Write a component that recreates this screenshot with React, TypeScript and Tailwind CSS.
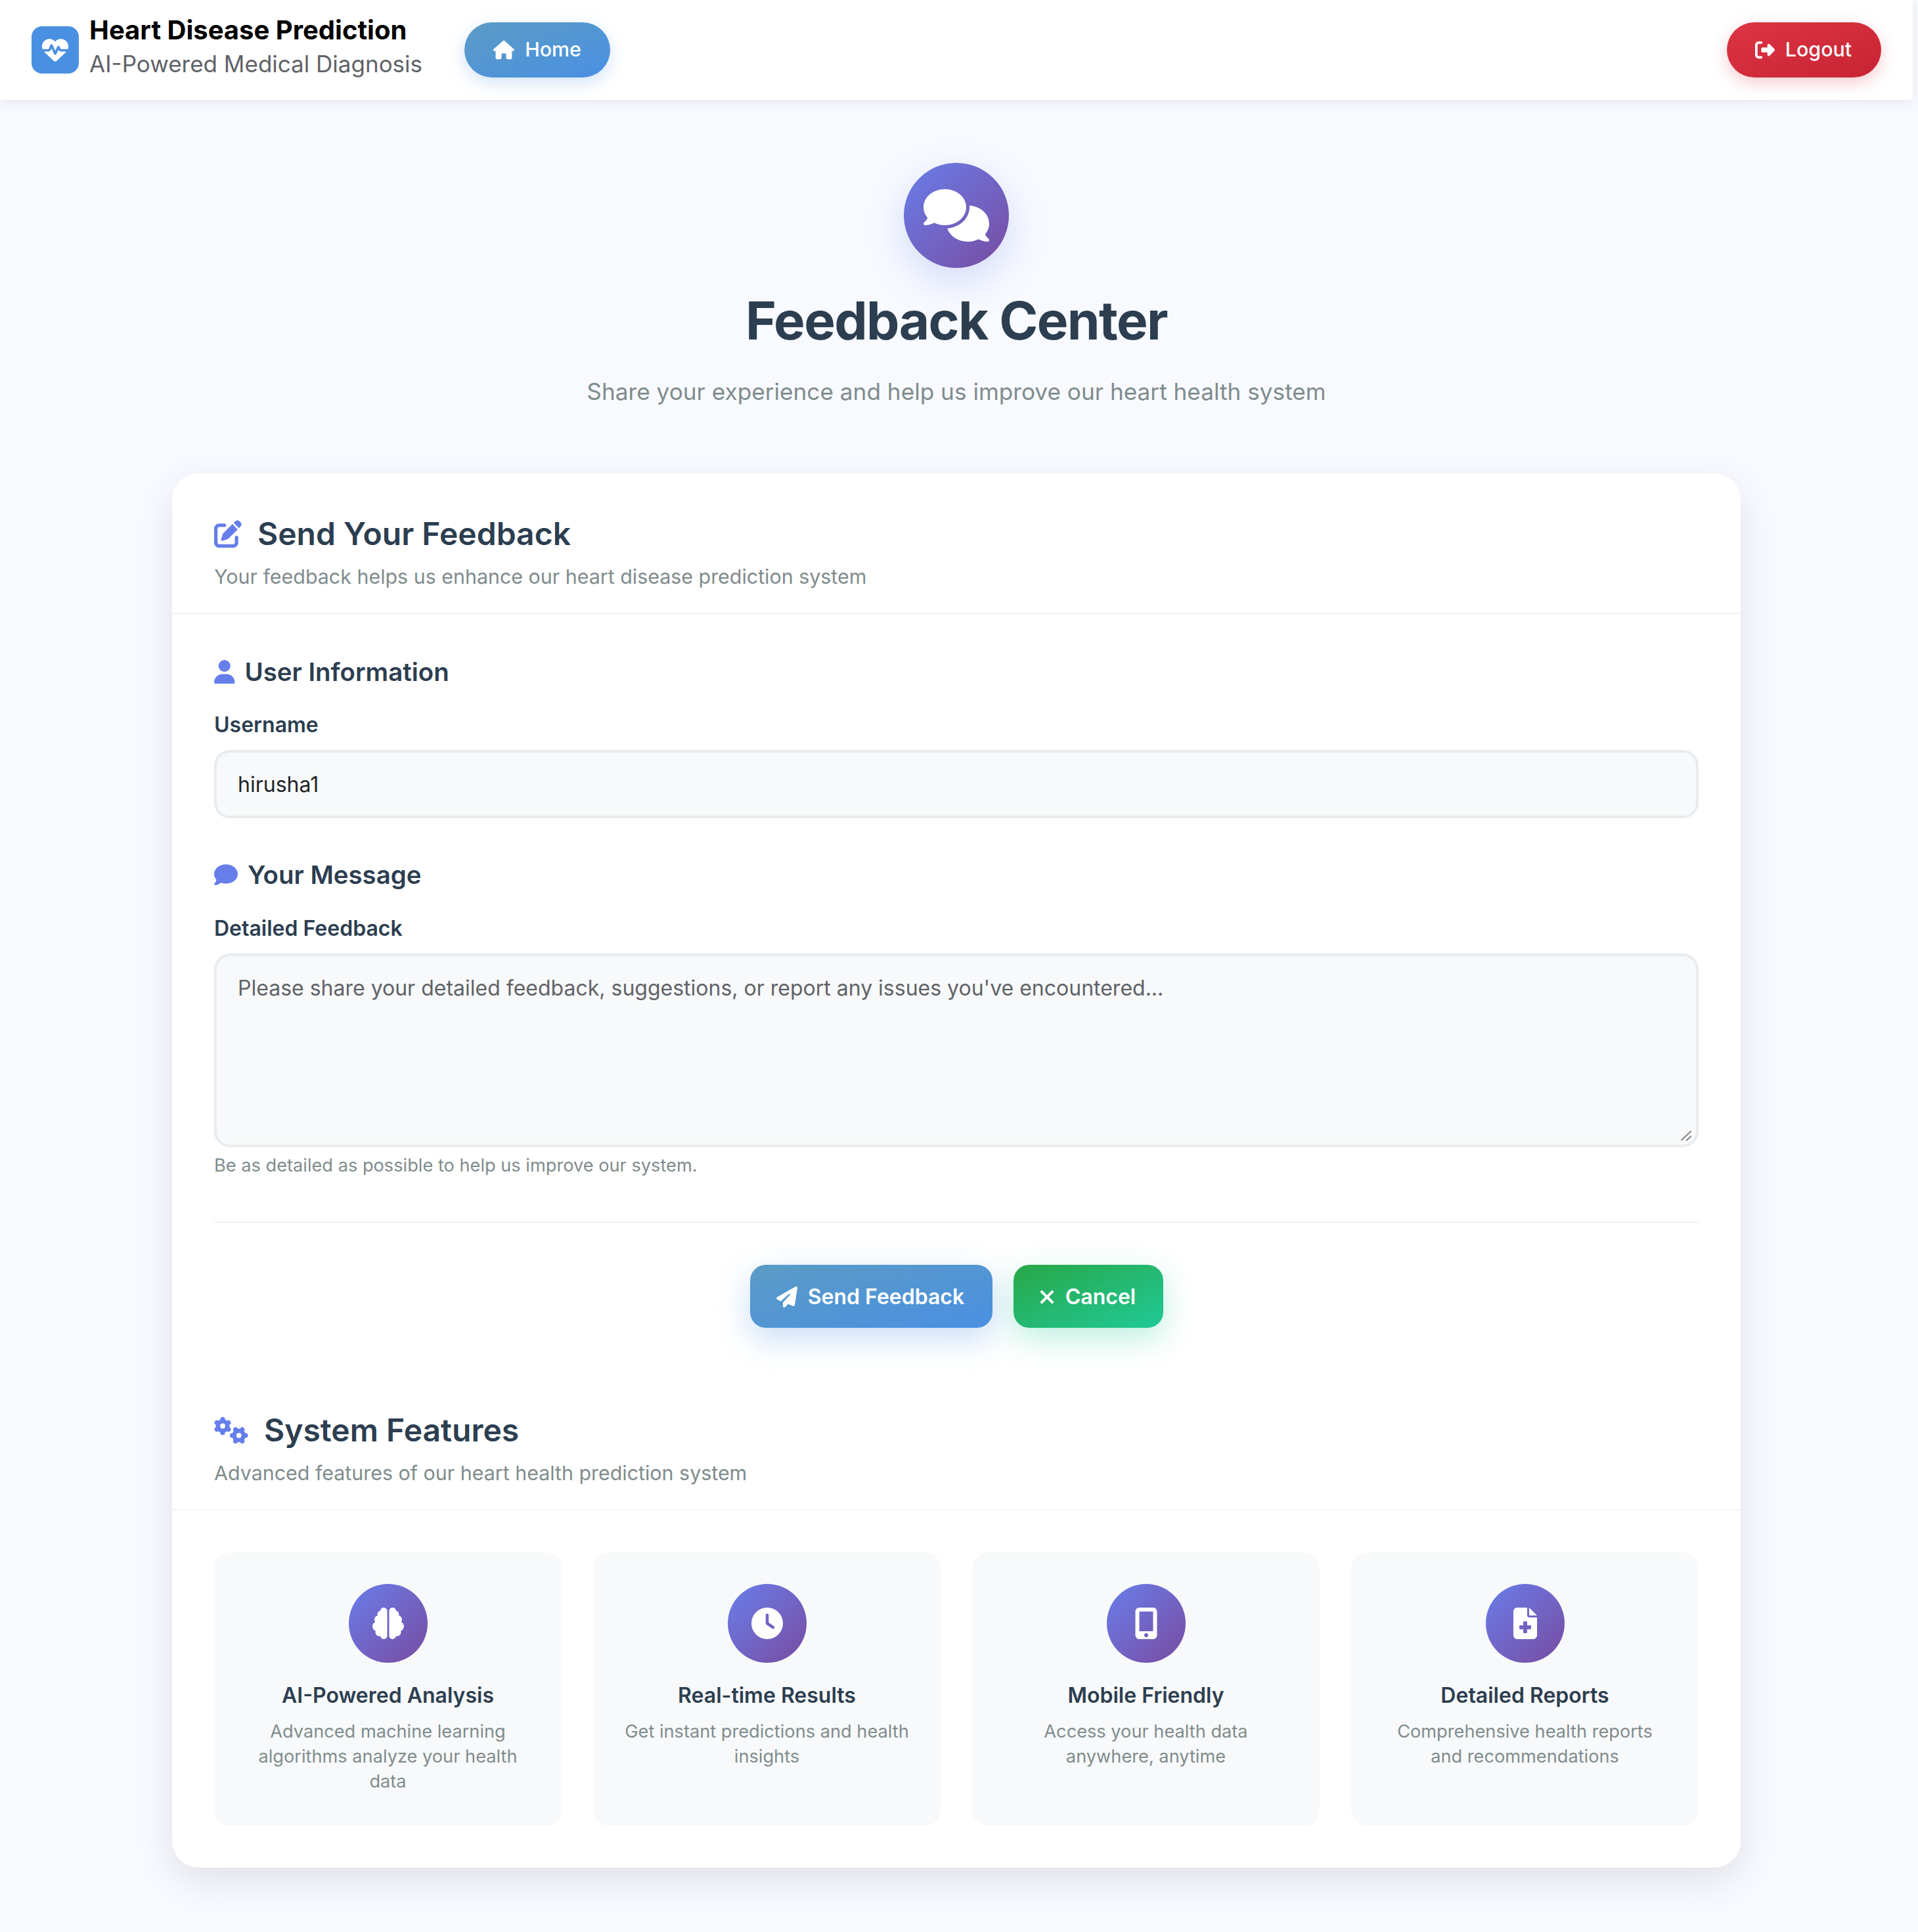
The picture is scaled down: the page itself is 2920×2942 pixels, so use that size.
import {
  FaBrain,
  FaClock,
  FaComment,
  FaComments,
  FaFileMedical,
  FaGears,
  FaHeartPulse,
  FaHouse,
  FaMobileScreenButton,
  FaPaperPlane,
  FaPenToSquare,
  FaRightFromBracket,
  FaUser,
  FaXmark,
} from "react-icons/fa6";
import type { ReactNode } from "react";

const features = [
  {
    icon: <FaBrain className="size-12" />,
    title: "AI-Powered Analysis",
    text: "Advanced machine learning algorithms analyze your health data",
  },
  {
    icon: <FaClock className="size-12" />,
    title: "Real-time Results",
    text: "Get instant predictions and health insights",
  },
  {
    icon: <FaMobileScreenButton className="size-12" />,
    title: "Mobile Friendly",
    text: "Access your health data anywhere, anytime",
  },
  {
    icon: <FaFileMedical className="size-12" />,
    title: "Detailed Reports",
    text: "Comprehensive health reports and recommendations",
  },
];

function SectionHeader({
  icon,
  title,
  subtitle,
}: {
  icon: ReactNode;
  title: string;
  subtitle: string;
}) {
  return (
    <div className="border-b-2 border-[#f1f3f4] px-16 pt-[62px] pb-[36px]">
      <h2 className="flex items-center gap-6 text-[48px] leading-[60px] font-semibold text-[#2c3e50]">
        {icon}
        {title}
      </h2>
      <p className="mt-4 text-[30.4px] leading-[38px] text-[#7f8c8d]">{subtitle}</p>
    </div>
  );
}

function FieldHeading({ icon, title }: { icon: ReactNode; title: string }) {
  return (
    <h3 className="flex items-center gap-[15px] text-[38.4px] leading-[48px] font-semibold text-[#2c3e50]">
      {icon}
      {title}
    </h3>
  );
}

export default function App() {
  return (
    <div className="min-h-[2942px] w-full bg-[#f8faff] font-['Inter',sans-serif]">
      <div className="w-[2912px]">
        {/* Nav */}
        <header className="flex h-[152px] items-center justify-between bg-white px-12 shadow-[0_4px_20px_rgba(0,0,0,0.08)]">
          <div className="flex items-center">
            <div className="flex size-[72px] items-center justify-center rounded-2xl bg-[#4a90e2] text-white">
              <FaHeartPulse className="size-10" />
            </div>
            <div className="ml-4 pb-[9px]">
              <div className="text-[40px] leading-[48px] font-bold text-black">
                Heart Disease Prediction
              </div>
              <div className="mt-[2px] text-[35px] leading-[50px] text-[#5f6368]">
                AI-Powered Medical Diagnosis
              </div>
            </div>
            <button className="ml-16 flex h-[84px] w-[222px] items-center justify-center gap-4 rounded-full bg-gradient-to-br from-[#5b9bc5] to-[#4a90e2] text-[30.4px] font-medium text-white shadow-[0_8px_24px_rgba(74,144,226,0.25)]">
              <FaHouse className="size-8" />
              Home
            </button>
          </div>
          <button className="flex h-[84px] w-[235px] items-center justify-center gap-4 rounded-full bg-gradient-to-br from-[#dc3545] to-[#c82333] pr-[2px] text-[30.4px] font-medium text-white shadow-[0_8px_24px_rgba(220,53,69,0.25)]">
            <FaRightFromBracket className="size-[30px]" />
            Logout
          </button>
        </header>

        <main className="flex flex-col items-center pt-24">
          {/* Hero */}
          <div className="flex size-40 items-center justify-center rounded-full bg-gradient-to-br from-[#667eea] to-[#764ba2] text-white shadow-[0_20px_60px_rgba(102,126,234,0.25)]">
            <FaComments className="size-[100px]" />
          </div>
          <h1 className="mt-8 text-[80px] leading-[96px] font-bold tracking-[-1.6px] text-[#2c3e50]">
            Feedback Center
          </h1>
          <p className="mt-8 text-[35.2px] leading-[56px] text-[#7f8c8d]">
            Share your experience and help us improve our heart health system
          </p>

          {/* Card */}
          <section className="mt-[97px] w-[2388px] rounded-[40px] bg-white shadow-[0_20px_60px_rgba(0,0,0,0.1)]">
            <SectionHeader
              icon={<FaPenToSquare className="size-[42px] text-[#667eea]" />}
              title="Send Your Feedback"
              subtitle="Your feedback helps us enhance our heart disease prediction system"
            />

            <div className="px-16 pt-16 pb-16">
              <FieldHeading
                icon={<FaUser className="h-9 w-[31.5px] text-[#667eea]" />}
                title="User Information"
              />
              <label className="mt-[37px] block text-[32px] leading-[40px] font-semibold text-[#2c3e50]">
                Username
              </label>
              <input
                readOnly
                value="hirusha1"
                className="mt-[18px] block h-[104px] w-full rounded-3xl border-4 border-[#e9ecef] bg-[#f8f9fa] px-8 text-[32px] text-[#212529] outline-none"
              />

              <div className="mt-[62px]">
                <FieldHeading
                  icon={<FaComment className="size-9 text-[#667eea]" />}
                  title="Your Message"
                />
              </div>
              <label className="mt-[38px] block text-[32px] leading-[40px] font-semibold text-[#2c3e50]">
                Detailed Feedback
              </label>
              <div className="relative mt-[18px]">
                <textarea
                  readOnly
                  placeholder="Please share your detailed feedback, suggestions, or report any issues you've encountered..."
                  className="block h-[295px] w-full resize-none rounded-3xl border-4 border-[#e9ecef] bg-[#f8f9fa] px-8 py-[29px] text-[32px] leading-[40px] text-[#212529] outline-none placeholder:text-[#5f6368]"
                />
                {/* resize grip */}
                <svg
                  viewBox="0 0 16 15"
                  className="absolute right-[11px] bottom-[10px] h-[15px] w-4 text-[#7f7f7f]"
                >
                  <path
                    d="M0 15 16 0M8 15l8-7"
                    fill="none"
                    stroke="currentColor"
                    strokeWidth="2"
                  />
                </svg>
              </div>
              <p className="mt-[10px] text-[27.2px] leading-[36px] text-[#7f8c8d]">
                Be as detailed as possible to help us improve our system.
              </p>

              <div className="mt-[67px] flex justify-center gap-8 border-t-2 border-[#f1f3f4] pt-16">
                <button className="flex h-24 w-[369px] items-center justify-center gap-4 rounded-3xl bg-gradient-to-br from-[#5b9bc5] to-[#4a90e2] pr-[2px] pt-[2px] text-[32px] font-semibold text-white shadow-[0_16px_48px_rgba(74,144,226,0.3)]">
                  <FaPaperPlane className="size-8" />
                  Send Feedback
                </button>
                <button className="flex h-24 w-[228px] items-center justify-center gap-3 rounded-3xl bg-gradient-to-br from-[#28a745] to-[#20c997] pr-[6px] pt-[2px] text-[32px] font-semibold text-white shadow-[0_16px_48px_rgba(32,201,151,0.3)]">
                  <FaXmark className="size-8" />
                  Cancel
                </button>
              </div>
            </div>

            <SectionHeader
              icon={<FaGears className="size-[52px] text-[#667eea]" />}
              title="System Features"
              subtitle="Advanced features of our heart health prediction system"
            />

            {/* Features */}
            <div className="grid grid-cols-4 gap-12 p-16">
              {features.map((f) => (
                <div
                  key={f.title}
                  className="flex h-[416px] flex-col items-center rounded-3xl bg-[#f8f9fa] px-[46px] pt-12 text-center"
                >
                  <div className="flex size-[120px] items-center justify-center rounded-full bg-gradient-to-br from-[#667eea] to-[#764ba2] text-white">
                    {f.icon}
                  </div>
                  <h4 className="mt-7 text-[32px] leading-[44px] font-semibold text-[#2c3e50]">
                    {f.title}
                  </h4>
                  <p className="mt-[14px] text-[27.2px] leading-[38px] text-[#7f8c8d]">{f.text}</p>
                </div>
              ))}
            </div>
          </section>
        </main>
      </div>
    </div>
  );
}
